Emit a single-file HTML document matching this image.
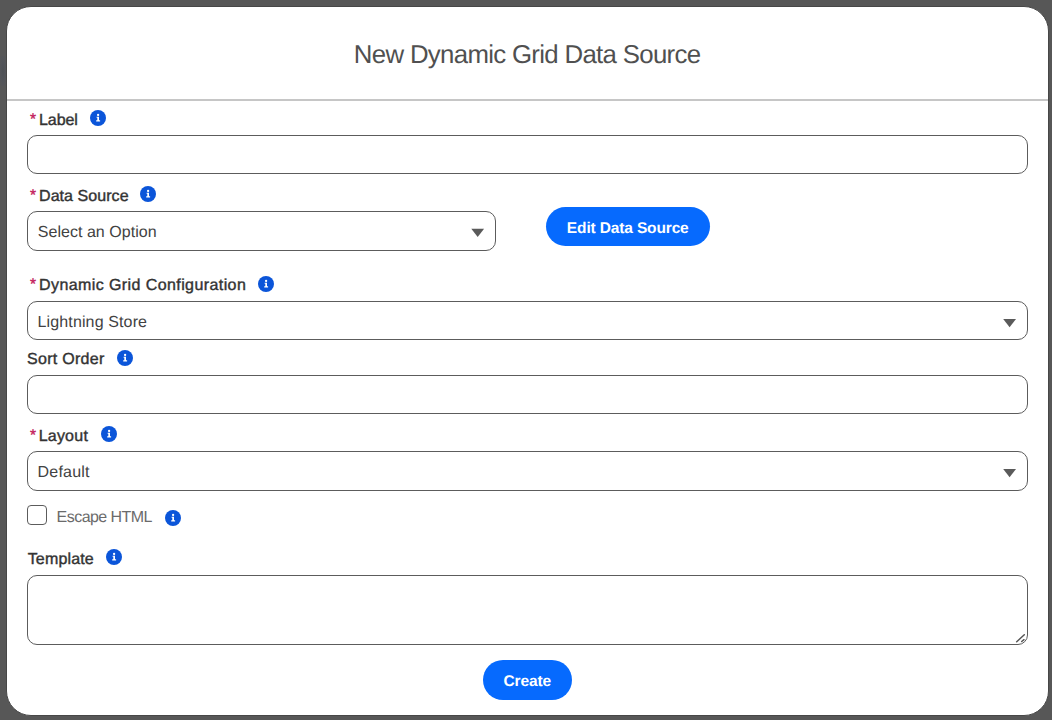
<!DOCTYPE html>
<html><head><meta charset="utf-8">
<style>
html,body{margin:0;padding:0;width:1052px;height:720px;overflow:hidden;background:#575757;font-family:"Liberation Sans",sans-serif;}
.modal{position:absolute;left:6px;top:6px;width:1041px;height:708px;background:#fff;border:1px solid #474747;border-radius:25px;}
.t{position:absolute;white-space:nowrap;line-height:1;text-rendering:geometricPrecision;}
.hdr{position:absolute;left:7px;top:99px;width:1041px;height:2px;background:#c6c6c6;}
.title{color:#505050;}
.lbl{color:#333;-webkit-text-stroke:0.4px #333;}
.req{font-size:15.5px;color:#c2185b;-webkit-text-stroke:0.35px #c2185b;}
.val{color:#424242;}
.esc{color:#6b6b6b;}
.box{position:absolute;border:1px solid #5c5c5c;box-sizing:border-box;background:#fff;}
.info{position:absolute;}
.arrow{position:absolute;width:0;height:0;border-left:7.2px solid transparent;border-right:7.2px solid transparent;border-top:9px solid #5a5a5a;}
.btn{position:absolute;background:#066afe;border-radius:20px;}
.btxt{font-weight:bold;color:#fff;}
</style></head><body>
<div style="position:absolute;left:0;top:56px;width:6px;height:30px;background:radial-gradient(ellipse at 50% 50%, #4e5155 0%, #53555a 50%, #575757 100%)"></div>
<div class="modal"></div>
<div class="hdr"></div>
<div class="t title" style="left:353.85px;top:42.65px;font-size:25.8px;letter-spacing:-0.680px">New Dynamic Grid Data Source</div>
<div class="t req" style="left:30px;top:112px">*</div>
<div class="t lbl" style="left:39.04px;top:112.83px;font-size:16px;letter-spacing:-0.095px">Label</div>
<svg class="info" style="left:90px;top:110px" viewBox="0 0 16 16" width="16" height="16"><circle cx="8" cy="8" r="8" fill="#0b55d9"/><circle cx="8.1" cy="5.0" r="1.15" fill="#fff"/><path d="M6.6 6.7 H9.0 V10.3 H10.1 V11.4 H6.2 V10.3 H7.3 V7.8 H6.6 Z" fill="#fff"/></svg>
<div class="box" style="left:27px;top:135px;width:1001px;height:39px;border-radius:10px"></div>
<div class="t req" style="left:30px;top:188px">*</div>
<div class="t lbl" style="left:39.03px;top:189.04px;font-size:16px;letter-spacing:0.058px">Data Source</div>
<svg class="info" style="left:140px;top:186px" viewBox="0 0 16 16" width="16" height="16"><circle cx="8" cy="8" r="8" fill="#0b55d9"/><circle cx="8.1" cy="5.0" r="1.15" fill="#fff"/><path d="M6.6 6.7 H9.0 V10.3 H10.1 V11.4 H6.2 V10.3 H7.3 V7.8 H6.6 Z" fill="#fff"/></svg>
<div class="box" style="left:27px;top:211px;width:469px;height:40px;border-radius:10px"></div>
<div class="t val" style="left:37.78px;top:224.64px;font-size:16px;letter-spacing:0.037px">Select an Option</div>
<svg style="position:absolute;left:0;top:0;overflow:visible" width="1" height="1"><polygon points="471.3,228.7 484.1,228.7 477.7,237.0" fill="#5a5a5a"/></svg>
<div class="btn" style="left:546px;top:207px;width:164px;height:39px"></div>
<div class="t btxt" style="left:566.87px;top:220.77px;font-size:15.5px;letter-spacing:-0.144px">Edit Data Source</div>
<div class="t req" style="left:30px;top:277.3px">*</div>
<div class="t lbl" style="left:39.03px;top:277.54px;font-size:16px;letter-spacing:0.411px">Dynamic Grid Configuration</div>
<svg class="info" style="left:258px;top:276px" viewBox="0 0 16 16" width="16" height="16"><circle cx="8" cy="8" r="8" fill="#0b55d9"/><circle cx="8.1" cy="5.0" r="1.15" fill="#fff"/><path d="M6.6 6.7 H9.0 V10.3 H10.1 V11.4 H6.2 V10.3 H7.3 V7.8 H6.6 Z" fill="#fff"/></svg>
<div class="box" style="left:27px;top:301px;width:1001px;height:39px;border-radius:10px"></div>
<div class="t val" style="left:37.56px;top:314.74px;font-size:16px;letter-spacing:0.129px">Lightning Store</div>
<svg style="position:absolute;left:0;top:0;overflow:visible" width="1" height="1"><polygon points="1003.2,319 1016.0,319 1009.6,327.3" fill="#5a5a5a"/></svg>
<div class="t lbl" style="left:27.08px;top:351.90px;font-size:16px;letter-spacing:0.272px">Sort Order</div>
<svg class="info" style="left:117px;top:350px" viewBox="0 0 16 16" width="16" height="16"><circle cx="8" cy="8" r="8" fill="#0b55d9"/><circle cx="8.1" cy="5.0" r="1.15" fill="#fff"/><path d="M6.6 6.7 H9.0 V10.3 H10.1 V11.4 H6.2 V10.3 H7.3 V7.8 H6.6 Z" fill="#fff"/></svg>
<div class="box" style="left:27px;top:375px;width:1001px;height:39px;border-radius:10px"></div>
<div class="t req" style="left:30px;top:428px">*</div>
<div class="t lbl" style="left:38.63px;top:428.86px;font-size:16px;letter-spacing:0.234px">Layout</div>
<svg class="info" style="left:101px;top:426px" viewBox="0 0 16 16" width="16" height="16"><circle cx="8" cy="8" r="8" fill="#0b55d9"/><circle cx="8.1" cy="5.0" r="1.15" fill="#fff"/><path d="M6.6 6.7 H9.0 V10.3 H10.1 V11.4 H6.2 V10.3 H7.3 V7.8 H6.6 Z" fill="#fff"/></svg>
<div class="box" style="left:27px;top:451px;width:1001px;height:40px;border-radius:10px"></div>
<div class="t val" style="left:37.57px;top:464.84px;font-size:16px;letter-spacing:0.195px">Default</div>
<svg style="position:absolute;left:0;top:0;overflow:visible" width="1" height="1"><polygon points="1003.2,469 1016.0,469 1009.6,477.3" fill="#5a5a5a"/></svg>
<div class="box" style="left:27px;top:505px;width:20px;height:20px;border-radius:4px"></div>
<div class="t esc" style="left:56.62px;top:509.84px;font-size:16px;letter-spacing:-0.547px">Escape HTML</div>
<svg class="info" style="left:165px;top:510px" viewBox="0 0 16 16" width="16" height="16"><circle cx="8" cy="8" r="8" fill="#0b55d9"/><circle cx="8.1" cy="5.0" r="1.15" fill="#fff"/><path d="M6.6 6.7 H9.0 V10.3 H10.1 V11.4 H6.2 V10.3 H7.3 V7.8 H6.6 Z" fill="#fff"/></svg>
<div class="t lbl" style="left:27.67px;top:552.30px;font-size:16px;letter-spacing:0.169px">Template</div>
<svg class="info" style="left:106px;top:549px" viewBox="0 0 16 16" width="16" height="16"><circle cx="8" cy="8" r="8" fill="#0b55d9"/><circle cx="8.1" cy="5.0" r="1.15" fill="#fff"/><path d="M6.6 6.7 H9.0 V10.3 H10.1 V11.4 H6.2 V10.3 H7.3 V7.8 H6.6 Z" fill="#fff"/></svg>
<div class="box" style="left:27px;top:575px;width:1001px;height:70px;border-radius:10px"></div>
<svg style="position:absolute;left:1014px;top:632px" width="14" height="12" viewBox="0 0 14 12"><path d="M2.7 9.7 L10.3 2.8 M7.7 9.5 L10 7.7" stroke="#555" stroke-width="1.5" stroke-linecap="round" fill="none"/></svg>
<div class="btn" style="left:483px;top:660px;width:89px;height:40px"></div>
<div class="t btxt" style="left:503.40px;top:673.72px;font-size:15.5px;letter-spacing:-0.086px">Create</div>
</body></html>
